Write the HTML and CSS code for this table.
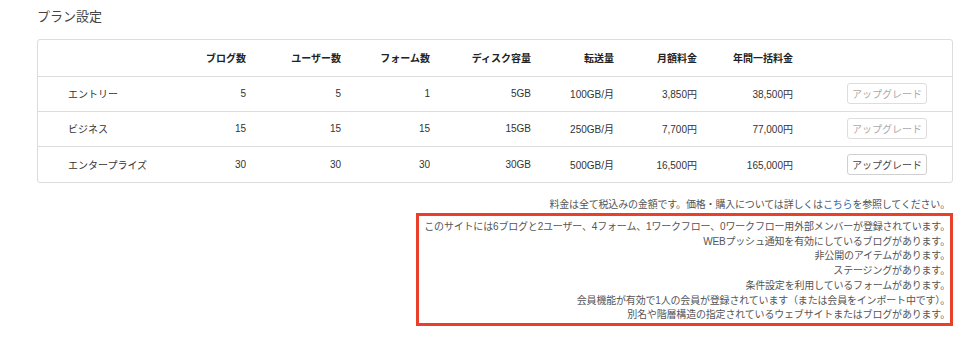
FILE: index.html
```html
<!DOCTYPE html>
<html lang="ja">
<head>
<meta charset="utf-8">
<title>プラン設定</title>
<link rel="stylesheet" href="styles.css">
</head>
<body>
<div class="page">
  <h2 class="title">プラン設定</h2>
  <div class="card">
    <table class="plans">
      <colgroup>
        <col class="c-name"><col class="c-blog"><col class="c-user"><col class="c-form"><col class="c-disk"><col class="c-trans"><col class="c-month"><col class="c-year"><col class="c-btn">
      </colgroup>
      <thead>
        <tr>
          <th></th><th>ブログ数</th><th>ユーザー数</th><th>フォーム数</th><th>ディスク容量</th><th>転送量</th><th>月額料金</th><th>年間一括料金</th><th></th>
        </tr>
      </thead>
      <tbody>
        <tr>
          <td class="name">エントリー</td><td>5</td><td>5</td><td>1</td><td>5GB</td><td>100GB/月</td><td>3,850円</td><td>38,500円</td>
          <td class="act"><button class="btn" disabled>アップグレード</button></td>
        </tr>
        <tr>
          <td class="name">ビジネス</td><td>15</td><td>15</td><td>15</td><td>15GB</td><td>250GB/月</td><td>7,700円</td><td>77,000円</td>
          <td class="act"><button class="btn" disabled>アップグレード</button></td>
        </tr>
        <tr>
          <td class="name">エンタープライズ</td><td>30</td><td>30</td><td>30</td><td>30GB</td><td>500GB/月</td><td>16,500円</td><td>165,000円</td>
          <td class="act"><button class="btn">アップグレード</button></td>
        </tr>
      </tbody>
    </table>
  </div>
  <div class="notes">
    <p class="tax">料金は全て税込みの金額です。価格・購入については詳しくは<a href="#" class="link">こちら</a>を参照してください。</p>
    <div class="warn">
      <p>このサイトには6ブログと2ユーザー、4フォーム、1ワークフロー、0ワークフロー用外部メンバーが登録されています。</p>
      <p>WEBプッシュ通知を有効にしているブログがあります。</p>
      <p>非公開のアイテムがあります。</p>
      <p>ステージングがあります。</p>
      <p>条件設定を利用しているフォームがあります。</p>
      <p>会員機能が有効で1人の会員が登録されています（または会員をインポート中です）。</p>
      <p>別名や階層構造の指定されているウェブサイトまたはブログがあります。</p>
    </div>
  </div>
</div>
</body>
</html>
```

FILE: styles.css
```css
* { box-sizing: border-box; }
html, body { margin: 0; padding: 0; background: #fff; }
body {
  font-family: "Liberation Sans", "Noto Sans CJK JP", sans-serif;
  color: #333;
}
.page {
  padding: 9px 7px 0 37px;
}
.title {
  margin: 0;
  font-size: 13px;
  font-weight: normal;
  color: #444;
  line-height: 16px;
  height: 30px;
}
.card {
  border: 1px solid #dcdcdc;
  border-radius: 3px;
  overflow: hidden;
}
.plans {
  width: 100%;
  border-collapse: collapse;
  table-layout: fixed;
  font-size: 10px;
}
.c-name { width: 130px; }
.c-blog { width: 78px; }
.c-user { width: 95px; }
.c-form { width: 89px; }
.c-disk { width: 101px; }
.c-trans { width: 83px; }
.c-month { width: 83px; }
.c-year { width: 96px; }
.c-btn { width: 159px; }
.plans th, .plans td {
  height: 35px;
  padding: 0;
  text-align: right;
  vertical-align: middle;
  white-space: nowrap;
}
.plans th {
  height: 36px;
  font-weight: bold;
  color: #222;
}
.plans tbody tr:last-child td { height: 36px; }
.plans tr { border-bottom: 1px solid #dcdcdc; }
.plans tbody tr:last-child { border-bottom: none; }
.plans td.name {
  text-align: left;
  padding-left: 30px;
}
.plans td.act { padding-right: 25px; }
.btn {
  font-family: "Liberation Sans", "Noto Sans CJK JP", sans-serif;
  font-size: 10px;
  width: 80px;
  height: 21px;
  padding: 0;
  background: #fff;
  border: 1px solid #d0d0d0;
  border-radius: 3px;
  color: #444;
}
.btn:disabled { color: #aaa; border-color: #ddd; }
.notes {
  display: flex;
  flex-direction: column;
  align-items: flex-end;
  padding-top: 14px;
  font-size: 10px;
  letter-spacing: -0.18px;
  color: #555;
}
.notes p { margin: 0; }
.tax {
  line-height: 15px;
  padding-right: 3px;
  margin-bottom: 1px !important;
}
.link { color: #2b6cb5; text-decoration: none; }
.warn {
  border: 3px solid #e8402b;
  padding: 4px 0 0 5px;
  text-align: right;
  line-height: 14.7px;
}
```
